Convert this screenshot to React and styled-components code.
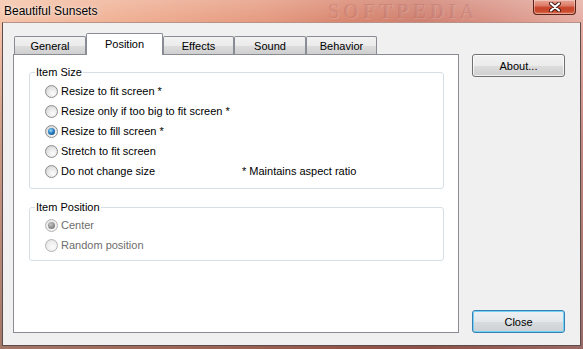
import React from 'react';
import styled, { createGlobalStyle, css } from 'styled-components';

const GlobalStyle = createGlobalStyle`
  html, body {
    margin: 0;
    padding: 0;
    background: #c98e80;
  }
  body {
    font-family: "Liberation Sans", Arial, sans-serif;
    font-size: 11px;
  }
`;

const Window = styled.div`
  width: 583px;
  height: 349px;
  box-sizing: border-box;
  display: flex;
  flex-direction: column;
  padding: 0 2px 3px 2px;
  background:
    linear-gradient(180deg, rgba(255,255,255,0.18) 0, rgba(255,255,255,0) 22px, rgba(80,30,30,0.25) 40%, rgba(60,25,25,0.45) 100%),
    linear-gradient(90deg, #f5c4a9 0%, #efaf93 22%, #e59a80 45%, #d8866f 60%, #cf7f6f 72%, #da9486 86%, #e6aea4 100%);
  overflow: hidden;
`;

const TitleBar = styled.div`
  height: 22px;
  flex: none;
  display: flex;
  align-items: flex-start;
  justify-content: space-between;
  position: relative;
`;

const Title = styled.div`
  font-size: 12px;
  line-height: 14px;
  color: #000;
  padding: 4px 0 0 2px;
  text-shadow: 0 0 6px rgba(255,255,255,0.8), 0 0 2px rgba(255,255,255,0.6);
`;

const TitleMark = styled.div`
  position: absolute;
  left: 326px;
  top: 0;
  height: 22px;
  font-family: "Liberation Serif", "Times New Roman", serif;
  font-weight: bold;
  font-size: 20px;
  line-height: 22px;
  letter-spacing: 4px;
  color: rgba(140, 50, 50, 0.17);
  text-shadow: 1px 1px 0 rgba(255,255,255,0.12);
  pointer-events: none;
`;

const CloseBox = styled.div`
  width: 43px;
  height: 15px;
  margin-right: 5px;
  box-sizing: border-box;
  border: 1px solid #5a2119;
  border-top: none;
  border-radius: 0 0 4px 4px;
  background: linear-gradient(180deg, #e9a698 0%, #dc7b66 40%, #c7442b 55%, #c94a2e 80%, #e07656 100%);
  box-shadow: inset 0 0 0 1px rgba(255,255,255,0.35);
  display: flex;
  align-items: center;
  justify-content: center;
`;

const Client = styled.div`
  flex: 1;
  display: flex;
  box-sizing: border-box;
  background: #f0f0f0;
  border: 1px solid #5e4b4b;
  border-top-color: #b69288;
  padding: 10px 0 0 10px;
`;

const LeftColumn = styled.div`
  width: 446px;
  display: flex;
  flex-direction: column;
`;

const TabStrip = styled.div`
  height: 21px;
  display: flex;
  align-items: flex-end;
  padding-left: 1px;
`;

const Tab = styled.div`
  box-sizing: border-box;
  width: ${p => p.$w}px;
  height: 18px;
  border: 1px solid #898c95;
  border-bottom: none;
  border-radius: 2px 2px 0 0;
  background: linear-gradient(180deg, #f2f2f2 0%, #ebebeb 50%, #dddddd 51%, #cfcfcf 100%);
  display: flex;
  align-items: center;
  justify-content: center;
  color: #000;
  font-size: 11px;
  ${p => p.$active && css`
    height: 22px;
    margin-bottom: -1px;
    background: #fff;
    position: relative;
    z-index: 2;
    padding-bottom: 2px;
  `}
`;

const Panel = styled.div`
  height: 279px;
  box-sizing: border-box;
  border: 1px solid #898c95;
  background: #fff;
  padding-top: 10px;
`;

const Group = styled.fieldset`
  margin: ${p => p.$top}px 14px 0 15px;
  border: 1px solid #d5dfe5;
  border-radius: 3px;
  padding: ${p => p.$pad};
  min-width: 0;
`;

const Legend = styled.legend`
  padding: 0 1px;
  font-size: 11px;
  line-height: 14px;
  color: #000;
`;

const Options = styled.div`
  padding-left: 10px;
`;

const Option = styled.div`
  display: flex;
  align-items: center;
  height: 20px;
  color: ${p => (p.$disabled ? '#6d6d6d' : '#000')};
  ${p => p.$w && css`width: ${p.$w}px;`}
`;

const NoteRow = styled.div`
  display: flex;
  align-items: center;
`;

const Note = styled.span`
  color: #000;
`;

const Radio = styled.span`
  width: 13px;
  height: 13px;
  box-sizing: border-box;
  flex: none;
  margin-right: 3px;
  border-radius: 50%;
  border: 1px solid ${p => (p.$disabled ? '#b3b3b3' : '#8c8c8c')};
  background: ${p =>
    p.$disabled
      ? 'radial-gradient(circle at 60% 65%, #fbfbfb 0%, #efefef 50%, #dcdcdc 100%)'
      : 'radial-gradient(circle at 62% 68%, #fdfdfd 0%, #e9e9e9 45%, #c9c9c9 100%)'};
  display: flex;
  align-items: center;
  justify-content: center;
  &::after {
    content: '';
    display: ${p => (p.$checked ? 'block' : 'none')};
    width: 7px;
    height: 7px;
    border-radius: 50%;
    background: ${p =>
      p.$disabled
        ? 'radial-gradient(circle at 40% 35%, #c8c8c8 0%, #8d8d8d 55%, #6e6e6e 100%)'
        : 'radial-gradient(circle at 40% 35%, #9fe1fb 0%, #2b7dc0 45%, #0e3f6e 100%)'};
  }
`;

const ButtonColumn = styled.div`
  width: 93px;
  margin-left: 13px;
  display: flex;
  flex-direction: column;
  justify-content: space-between;
  padding: 21px 0 12px 0;
`;

const Button = styled.div`
  height: 23px;
  box-sizing: border-box;
  border: 1px solid #707070;
  border-radius: 3px;
  background: linear-gradient(180deg, #f2f2f2 0%, #ebebeb 50%, #dddddd 51%, #cfcfcf 100%);
  box-shadow: inset 0 0 0 1px rgba(255,255,255,0.7);
  display: flex;
  align-items: center;
  justify-content: center;
  color: #000;
  font-size: 11px;
  ${p => p.$focused && css`
    border-color: #3c7fb1;
    box-shadow: inset 0 0 0 1px #6fd3f7;
    background: linear-gradient(180deg, #eef1f3 0%, #e4e8ea 50%, #d8dcde 51%, #cdd1d3 100%);
  `}
`;

const tabs = [
  { label: 'General', w: 72 },
  { label: 'Position', w: 77, active: true },
  { label: 'Effects', w: 71 },
  { label: 'Sound', w: 72 },
  { label: 'Behavior', w: 71 },
];

const sizeOptions = [
  { label: 'Resize to fit screen *' },
  { label: 'Resize only if too big to fit screen *' },
  { label: 'Resize to fill screen *', checked: true },
  { label: 'Stretch to fit screen' },
];

function RadioOption({ label, checked, disabled, width }) {
  return (
    <Option $disabled={disabled} $w={width}>
      <Radio $checked={checked} $disabled={disabled} />
      <span>{label}</span>
    </Option>
  );
}

function CloseGlyph() {
  return (
    <svg width="12" height="10" viewBox="0 0 12 10">
      <path d="M2 1.5 L10 8.5 M10 1.5 L2 8.5" stroke="#3a1410" strokeWidth="4" strokeLinecap="round" />
      <path d="M2 1.5 L10 8.5 M10 1.5 L2 8.5" stroke="#fff" strokeWidth="2.2" strokeLinecap="round" />
    </svg>
  );
}

export default function App() {
  return (
    <>
      <GlobalStyle />
      <Window>
        <TitleBar>
          <Title>Beautiful Sunsets</Title>
          <TitleMark>SOFTPEDIA</TitleMark>
          <CloseBox>
            <CloseGlyph />
          </CloseBox>
        </TitleBar>
        <Client>
          <LeftColumn>
            <TabStrip>
              {tabs.map(t => (
                <Tab key={t.label} $w={t.w} $active={t.active}>
                  {t.label}
                </Tab>
              ))}
            </TabStrip>
            <Panel>
              <Group $top={0} $pad="2px 0 7px 5px">
                <Legend>Item Size</Legend>
                <Options>
                  {sizeOptions.map(o => (
                    <RadioOption key={o.label} label={o.label} checked={o.checked} />
                  ))}
                  <NoteRow>
                    <RadioOption label="Do not change size" width={197} />
                    <Note>* Maintains aspect ratio</Note>
                  </NoteRow>
                </Options>
              </Group>
              <Group $top={11} $pad="1px 0 5px 5px">
                <Legend>Item Position</Legend>
                <Options>
                  <RadioOption label="Center" checked disabled />
                  <RadioOption label="Random position" disabled />
                </Options>
              </Group>
            </Panel>
          </LeftColumn>
          <ButtonColumn>
            <Button>About...</Button>
            <Button $focused>Close</Button>
          </ButtonColumn>
        </Client>
      </Window>
    </>
  );
}
